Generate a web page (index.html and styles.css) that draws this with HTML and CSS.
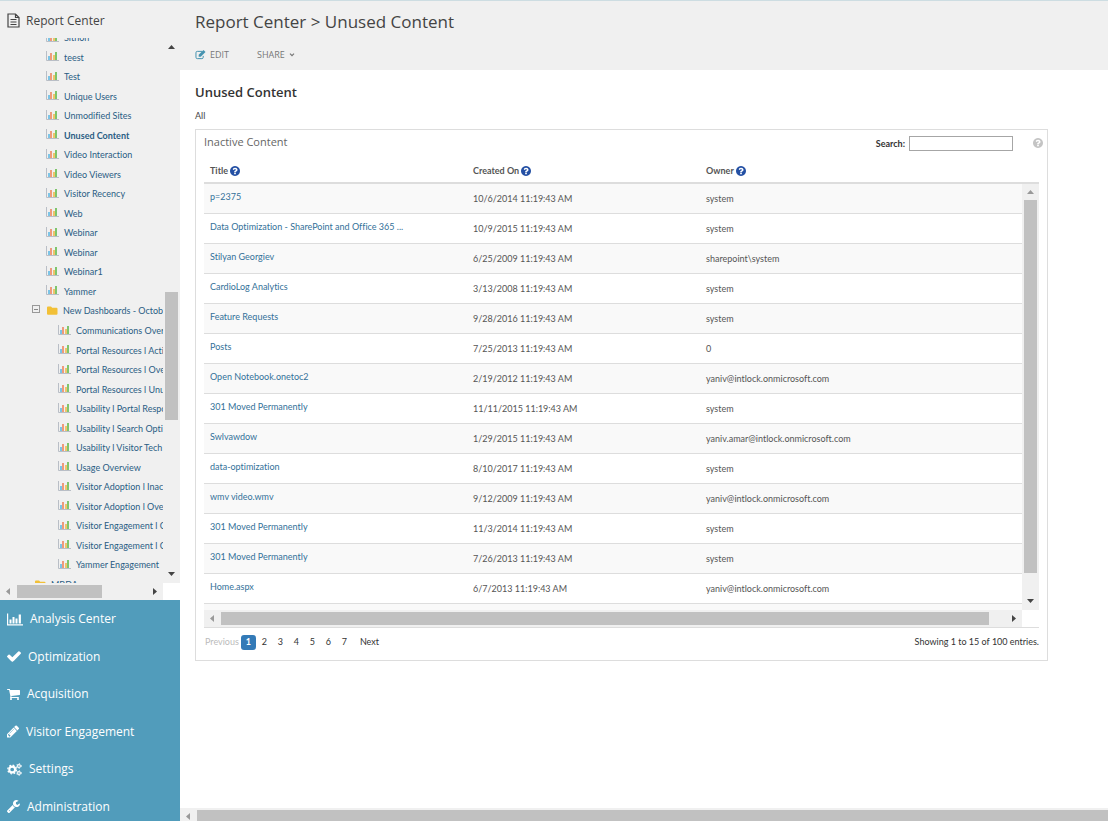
FILE: index.html
```html
<!DOCTYPE html>
<html lang="en">
<head>
<meta charset="utf-8">
<title>Report Center - Unused Content</title>
<link rel="stylesheet" href="styles.css">
</head>
<body>
<svg class="sprite" aria-hidden="true">
  <symbol id="chart" viewBox="0 0 13 10"><path d="M.5 0v9.500H13" fill="none" stroke="#b9bec6"/><path d="M2 5h2v4H2z" fill="#7cc4e6"/><path d="M4 2h2v7H4z" fill="#ee9a7c"/><path d="M7 4h2v5H7z" fill="#efc46c"/><path d="M9 1h2v8H9z" fill="#7fc56c"/></symbol>
  <symbol id="folder" viewBox="0 0 11 9"><path d="M0 1.500Q0 .5 1 .5h3l1.200 1.200H9.500q1 0 1 1v5q0 1-1 1H1q-1 0-1-1z" fill="#f2c037"/></symbol>
  <symbol id="file" viewBox="0 0 13 15"><path d="M1 1h7.500L12 4.500V14H1zM8.500 1v3.500H12M3.500 6.500h6M3.500 9h6M3.500 11.500h6" fill="none" stroke="currentColor" stroke-width="1.200"/></symbol>
  <symbol id="edit" viewBox="0 0 12 11"><path d="M8 1.500H2.500Q1 1.500 1 3v5q0 1.500 1.500 1.500h5Q9 9.500 9 8V6.500" fill="none" stroke="currentColor" stroke-width="1.100"/><path d="M4 7.500V5.200L9.300 0l2.200 2.200L6.300 7.500z" fill="currentColor"/></symbol>
  <symbol id="bars" viewBox="0 0 16 12"><path d="M.6 0v11.400H16" fill="none" stroke="currentColor" stroke-width="1.200"/><path d="M2.500 6h2v4h-2zM5.500 3.500h2V10h-2zM8.500 5h2v5h-2zM11.700 1h2.200v9h-2.200z" fill="currentColor"/></symbol>
  <symbol id="check" viewBox="121 334 1550 1188"><path fill="currentColor" d="M1671 566q0 40-28 68l-724 724-136 136q-28 28-68 28t-68-28l-136-136-362-362q-28-28-28-68t28-68l136-136q28-28 68-28t68 28l294 295 656-657q28-28 68-28t68 28l136 136q28 28 28 68z"/></symbol>
  <symbol id="cart" viewBox="64 256 1664 1408"><path fill="currentColor" d="M704 1536q0 52-38 90t-90 38-90-38-38-90 38-90 90-38 90 38 38 90zm896 0q0 52-38 90t-90 38-90-38-38-90 38-90 90-38 90 38 38 90zm128-1088v512q0 24-16.500 42.500t-40.500 21.500l-1044 122q13 60 13 70 0 16-24 64h920q26 0 45 19t19 45-19 45-45 19h-1024q-26 0-45-19t-19-45q0-11 8-31.500t16-36 21.500-40 15.500-29.500l-177-823h-204q-26 0-45-19t-19-45 19-45 45-19h256q16 0 28.500 6.500t19.500 15.500 13 24.500 8 26 5.500 29.500 4.500 26h1201q26 0 45 19t19 45z"/></symbol>
  <symbol id="pencil" viewBox="128 149 1515 1515"><path fill="currentColor" d="M491 1536l91-91-235-235-91 91v107h128v128h107zm523-928q0-22-22-22-10 0-17 7l-542 542q-7 7-7 17 0 22 22 22 10 0 17-7l542-542q7-7 7-17zm-54-192l416 416-832 832h-416v-416zm683 96q0 53-37 90l-166 166-416-416 166-165q36-38 90-38 53 0 91 38l235 234q37 39 37 91z"/></symbol>
  <symbol id="cogs" viewBox="0 0 16 14"><g fill="none" stroke="currentColor"><circle cx="5.500" cy="7" r="3.100" stroke-width="2.200"/><circle cx="5.500" cy="7" r="4.700" stroke-width="1.400" stroke-dasharray="1.850 1.841"/><circle cx="12.800" cy="3.200" r="1.500" stroke-width="1.200"/><circle cx="12.800" cy="3.200" r="2.500" stroke-width="1" stroke-dasharray="1.300 1.318"/><circle cx="12.800" cy="10.800" r="1.500" stroke-width="1.200"/><circle cx="12.800" cy="10.800" r="2.500" stroke-width="1" stroke-dasharray="1.300 1.318"/></g></symbol>
  <symbol id="wrench" viewBox="85 128 1641 1643"><path fill="currentColor" d="M448 1472q0-26-19-45t-45-19-45 19-19 45 19 45 45 19 45-19 19-45zm644-420l-682 682q-37 37-90 37-52 0-91-37l-106-108q-38-36-38-90 0-53 38-91l681-681q39 98 114.500 173.500t173.500 114.500zm634-435q0 39-23 106-47 134-164.500 217.500t-258.500 83.500q-185 0-316.500-131.500t-131.500-316.500 131.500-316.500 316.500-131.500q58 0 121.500 16.500t107.500 46.500q16 11 16 28t-16 28l-293 169v224l193 107q5-3 79-48.500t135.500-81 70.500-35.500q15 0 23.500 10t8.500 25z"/></symbol>
  <symbol id="help" viewBox="128 128 1536 1536"><path fill="currentColor" d="M1024 1376v-192q0-14-9-23t-23-9h-192q-14 0-23 9t-9 23v192q0 14 9 23t23 9h192q14 0 23-9t9-23zm256-672q0-88-55.500-163t-138.500-116-170-41q-243 0-371 213-15 24 8 42l132 100q7 6 19 6 16 0 25-12 53-68 86-92 34-24 86-24 48 0 85.500 26t37.500 59q0 38-20 61t-68 45q-63 28-115.500 86.500t-52.500 125.500v36q0 14 9 23t23 9h192q14 0 23-9t9-23q0-19 21.500-49.500t54.500-49.500q32-18 49-28.500t46-35 44.500-48 28-60.500 12.500-81zm384 192q0 209-103 385.500t-279.500 279.500-385.500 103-385.500-103-279.500-279.500-103-385.500 103-385.500 279.500-279.500 385.500-103 385.500 103 279.500 279.500 103 385.500z"/></symbol>
  <symbol id="chevron" viewBox="0 0 6 4"><path d="M1 .7l2 2 2-2" fill="none" stroke="currentColor" stroke-width="1.200"/></symbol>
  <symbol id="up" viewBox="0 0 7 4"><path d="M0 4L3.500 0 7 4z" fill="currentColor"/></symbol>
  <symbol id="down" viewBox="0 0 7 4"><path d="M0 0l3.500 4L7 0z" fill="currentColor"/></symbol>
  <symbol id="left" viewBox="0 0 4 7"><path d="M4 0L0 3.500 4 7z" fill="currentColor"/></symbol>
  <symbol id="right" viewBox="0 0 4 7"><path d="M0 0l4 3.500L0 7z" fill="currentColor"/></symbol>
</svg>

<aside class="sidebar">
  <h2 class="sidebar-title"><svg class="file-icon"><use href="#file"/></svg>Report Center</h2>
  <div class="tree-area">
    <div class="tree-view">
      <ul class="tree">
        <li><svg class="chart"><use href="#chart"/></svg><a href="#">Sithon</a></li>
        <li><svg class="chart"><use href="#chart"/></svg><a href="#">teest</a></li>
        <li><svg class="chart"><use href="#chart"/></svg><a href="#">Test</a></li>
        <li><svg class="chart"><use href="#chart"/></svg><a href="#">Unique Users</a></li>
        <li><svg class="chart"><use href="#chart"/></svg><a href="#">Unmodified Sites</a></li>
        <li class="current"><svg class="chart"><use href="#chart"/></svg><a href="#">Unused Content</a></li>
        <li><svg class="chart"><use href="#chart"/></svg><a href="#">Video Interaction</a></li>
        <li><svg class="chart"><use href="#chart"/></svg><a href="#">Video Viewers</a></li>
        <li><svg class="chart"><use href="#chart"/></svg><a href="#">Visitor Recency</a></li>
        <li><svg class="chart"><use href="#chart"/></svg><a href="#">Web</a></li>
        <li><svg class="chart"><use href="#chart"/></svg><a href="#">Webinar</a></li>
        <li><svg class="chart"><use href="#chart"/></svg><a href="#">Webinar</a></li>
        <li><svg class="chart"><use href="#chart"/></svg><a href="#">Webinar1</a></li>
        <li><svg class="chart"><use href="#chart"/></svg><a href="#">Yammer</a></li>
        <li class="group"><button class="toggle" aria-label="Collapse"></button><svg class="folder"><use href="#folder"/></svg><a href="#">New Dashboards - Octob</a></li>
        <li class="child"><svg class="chart"><use href="#chart"/></svg><a href="#">Communications Over</a></li>
        <li class="child"><svg class="chart"><use href="#chart"/></svg><a href="#">Portal Resources l Acti</a></li>
        <li class="child"><svg class="chart"><use href="#chart"/></svg><a href="#">Portal Resources l Ove</a></li>
        <li class="child"><svg class="chart"><use href="#chart"/></svg><a href="#">Portal Resources l Unu</a></li>
        <li class="child"><svg class="chart"><use href="#chart"/></svg><a href="#">Usability l Portal Respo</a></li>
        <li class="child"><svg class="chart"><use href="#chart"/></svg><a href="#">Usability l Search Opti</a></li>
        <li class="child"><svg class="chart"><use href="#chart"/></svg><a href="#">Usability l Visitor Tech</a></li>
        <li class="child"><svg class="chart"><use href="#chart"/></svg><a href="#">Usage Overview</a></li>
        <li class="child"><svg class="chart"><use href="#chart"/></svg><a href="#">Visitor Adoption l Inac</a></li>
        <li class="child"><svg class="chart"><use href="#chart"/></svg><a href="#">Visitor Adoption l Ove</a></li>
        <li class="child"><svg class="chart"><use href="#chart"/></svg><a href="#">Visitor Engagement l C</a></li>
        <li class="child"><svg class="chart"><use href="#chart"/></svg><a href="#">Visitor Engagement l C</a></li>
        <li class="child"><svg class="chart"><use href="#chart"/></svg><a href="#">Yammer Engagement</a></li>
        <li class="closed"><svg class="folder"><use href="#folder"/></svg><a href="#">MBDA</a></li>
      </ul>
    </div>
    <div class="vbar tree-vbar"><svg class="arrow-v"><use href="#up"/></svg><div class="vtrack"><i class="vthumb"></i></div><svg class="arrow-v"><use href="#down"/></svg></div>
    <div class="hbar tree-hbar"><svg class="arrow-h off"><use href="#left"/></svg><div class="htrack"><i class="hthumb"></i></div><svg class="arrow-h"><use href="#right"/></svg></div>
    <div class="corner"></div>
  </div>
  <nav class="nav">
    <a href="#"><svg class="w16"><use href="#bars"/></svg>Analysis Center</a>
    <a href="#"><svg class="w14"><use href="#check"/></svg>Optimization</a>
    <a href="#"><svg class="w13"><use href="#cart"/></svg>Acquisition</a>
    <a href="#"><svg class="w12"><use href="#pencil"/></svg>Visitor Engagement</a>
    <a href="#"><svg class="w15"><use href="#cogs"/></svg>Settings</a>
    <a href="#"><svg class="w13"><use href="#wrench"/></svg>Administration</a>
  </nav>
</aside>

<main class="main">
  <header class="header">
    <h1>Report Center &gt; Unused Content</h1>
    <div class="actions">
      <button><svg class="edit-icon"><use href="#edit"/></svg>EDIT</button>
      <button>SHARE<svg class="chevron"><use href="#chevron"/></svg></button>
    </div>
  </header>
  <div class="content">
    <h2>Unused Content</h2>
    <p class="scope">All</p>
    <section class="widget">
      <div class="widget-head">
        <h3>Inactive Content</h3>
        <label for="search">Search:</label><input id="search" type="text">
        <button class="widget-help" aria-label="Help"><svg><use href="#help"/></svg></button>
      </div>
      <div class="grid">
        <div class="grid-view">
          <table>
            <thead><tr><th class="c-title">Title <svg><use href="#help"/></svg></th><th class="c-date">Created On <svg><use href="#help"/></svg></th><th>Owner <svg><use href="#help"/></svg></th></tr></thead>
            <tbody>
              <tr><td><a href="#">p=2375</a></td><td>10/6/2014 11:19:43 AM</td><td>system</td></tr>
              <tr><td><a href="#">Data Optimization - SharePoint and Office 365 ...</a></td><td>10/9/2015 11:19:43 AM</td><td>system</td></tr>
              <tr><td><a href="#">Stilyan Georgiev</a></td><td>6/25/2009 11:19:43 AM</td><td>sharepoint\system</td></tr>
              <tr><td><a href="#">CardioLog Analytics</a></td><td>3/13/2008 11:19:43 AM</td><td>system</td></tr>
              <tr><td><a href="#">Feature Requests</a></td><td>9/28/2016 11:19:43 AM</td><td>system</td></tr>
              <tr><td><a href="#">Posts</a></td><td>7/25/2013 11:19:43 AM</td><td>0</td></tr>
              <tr><td><a href="#">Open Notebook.onetoc2</a></td><td>2/19/2012 11:19:43 AM</td><td>yaniv@intlock.onmicrosoft.com</td></tr>
              <tr><td><a href="#">301 Moved Permanently</a></td><td>11/11/2015 11:19:43 AM</td><td>system</td></tr>
              <tr><td><a href="#">Swlvawdow</a></td><td>1/29/2015 11:19:43 AM</td><td>yaniv.amar@intlock.onmicrosoft.com</td></tr>
              <tr><td><a href="#">data-optimization</a></td><td>8/10/2017 11:19:43 AM</td><td>system</td></tr>
              <tr><td><a href="#">wmv video.wmv</a></td><td>9/12/2009 11:19:43 AM</td><td>yaniv@intlock.onmicrosoft.com</td></tr>
              <tr><td><a href="#">301 Moved Permanently</a></td><td>11/3/2014 11:19:43 AM</td><td>system</td></tr>
              <tr><td><a href="#">301 Moved Permanently</a></td><td>7/26/2013 11:19:43 AM</td><td>system</td></tr>
              <tr><td><a href="#">Home.aspx</a></td><td>6/7/2013 11:19:43 AM</td><td>yaniv@intlock.onmicrosoft.com</td></tr>
              <tr><td></td><td></td><td></td></tr>
            </tbody>
          </table>
        </div>
        <div class="vbar grid-vbar"><svg class="arrow-v off"><use href="#up"/></svg><div class="vtrack"><i class="vthumb"></i></div><svg class="arrow-v"><use href="#down"/></svg></div>
        <div class="hbar grid-hbar"><svg class="arrow-h off"><use href="#left"/></svg><div class="htrack"><i class="hthumb"></i></div><svg class="arrow-h"><use href="#right"/></svg></div>
      </div>
      <footer class="pager">
        <button disabled class="prev">Previous</button>
        <button class="page active">1</button><button class="page">2</button><button class="page">3</button><button class="page">4</button><button class="page">5</button><button class="page">6</button><button class="page">7</button>
        <button class="next">Next</button>
        <span class="summary">Showing 1 to 15 of 100 entries.</span>
      </footer>
    </section>
  </div>
  <div class="hbar page-hbar"><svg class="arrow-h off"><use href="#left"/></svg><div class="htrack"><i class="hthumb"></i></div></div>
</main>
</body>
</html>
```
FILE: styles.css
```css
* { box-sizing: border-box; }

body {
  margin: 0;
  height: 100vh;
  display: flex;
  overflow: hidden;
  border-top: 1px solid #cddde2;
  background: #fff;
  color: #555;
  font: 9px/12px Lato, "Segoe UI", sans-serif;
  font-variant-ligatures: none;
}

h1, h2, h3, p, ul { margin: 0; padding: 0; font-weight: 400; }
h1, h2, h3, .nav { font-family: "Open Sans", "Segoe UI", sans-serif; }
ul { list-style: none; }
a { text-decoration: none; color: inherit; }
button { border: 0; padding: 0; background: none; font: inherit; font-variant-ligatures: none; color: inherit; cursor: pointer; }
svg { display: block; flex: none; }
.sprite { position: absolute; width: 0; height: 0; }

/* Sidebar */
.sidebar {
  flex: 0 0 180px;
  display: flex;
  flex-direction: column;
  overflow: hidden;
  background: #f0f0f0;
}
.sidebar-title {
  flex: 0 0 37px;
  display: flex;
  align-items: center;
  gap: 6px;
  padding: 2px 7px 0;
  font-size: 12px;
  color: #444;
}
.file-icon { width: 13px; height: 15px; }

.tree-area {
  flex: 1;
  min-height: 0;
  display: grid;
  grid-template-columns: minmax(0, 1fr) 17px;
  grid-template-rows: minmax(0, 1fr) 17px;
}
.tree-view { overflow: hidden; }
.tree {
  display: grid;
  grid-auto-rows: 1fr;
  height: 566px;
  margin-top: -10px;
  color: #2a5d84;
  white-space: nowrap;
}
.tree li { display: flex; align-items: center; gap: 5px; padding-left: 46px; }
.tree .child { padding-left: 58px; }
.tree .group { padding-left: 32px; }
.tree .closed { padding-left: 35px; }
.tree .current { font-weight: 700; }
.tree a { padding-top: 1px; }
.chart { width: 13px; height: 10px; margin-bottom: 2px; }
.folder { width: 11px; height: 9px; }
.toggle {
  width: 8px;
  height: 8px;
  margin: 0 2px 3px 0;
  border: 1px solid #999;
  background: linear-gradient(#888, #888) center / 4px 1px no-repeat;
}
.corner { background: #fff; }

/* Scroll bars */
.vbar, .hbar { display: flex; align-items: center; background: #f0f0f0; color: #444; }
.vbar { flex-direction: column; padding: 7px 0; }
.vtrack, .htrack { flex: 1; display: flex; }
.vtrack { flex-direction: column; margin: 6px 0; }
.htrack { margin: 0 7px; }
.vthumb, .hthumb { background: #c1c1c1; }
.vthumb { width: 13px; }
.hthumb { height: 13px; }
.arrow-v { width: 7px; height: 4px; }
.arrow-h { width: 4px; height: 7px; }
.off { color: #999; }
.hbar { padding: 0 6px; }
.tree-vbar .vthumb { height: 128px; margin-top: 237px; }
.tree-hbar .hthumb { width: 85px; }

/* Section navigation */
.nav {
  display: grid;
  grid-auto-rows: 1fr;
  flex: 0 0 225px;
  margin-bottom: -4px;
  background: #519cbb;
  color: #fff;
  font-size: 12px;
}
.nav a { display: flex; align-items: center; gap: 7px; padding: 1px 0 0 7px; }
.nav svg { height: 13px; }
.w12 { width: 12px; }
.w13 { width: 13px; }
.w14 { width: 14px; }
.w15 { width: 15px; }
.w16 { width: 16px; }

/* Page */
.main { flex: 1; min-width: 0; display: flex; flex-direction: column; overflow: hidden; }
.header { flex: 0 0 69px; padding: 9px 15px 0; background: #f0f0f0; }
.header h1 { font-size: 17px; line-height: 24px; color: #444; }
.actions { display: flex; gap: 28px; margin-top: 15px; color: #777; font-family: "Open Sans", "Segoe UI", sans-serif; }
.actions button { display: flex; align-items: center; gap: 4px; }
.edit-icon { width: 11px; height: 10px; color: #4593b0; }
.chevron { width: 6px; height: 4px; }

.content { flex: 1; min-height: 0; padding: 12px 60px 0 15px; }
.content h2 { font-size: 13px; line-height: 20px; font-weight: 600; color: #333; }
.scope { margin: 8px 0 7px; color: #444; }

.widget { border: 1px solid #ddd; padding: 0 8px; }
.widget-head { display: flex; align-items: center; height: 25px; }
.widget-head h3 { margin-right: auto; padding-bottom: 2px; font-size: 11px; line-height: 16px; color: #666; }
.widget-head label { font-weight: 700; color: #333; margin: 2px 4px 0 0; }
.widget-head input { width: 104px; height: 15px; margin: 2px 20px 0 0; border: 1px solid #a6a6a6; padding: 0 4px; font: inherit; }
.widget-help { color: #c4c4c4; margin-right: -4px; }
.widget-help svg { width: 10px; height: 10px; }

.grid {
  display: grid;
  grid-template-columns: minmax(0, 1fr) 17px;
  grid-template-rows: 455px 17px;
  border-bottom: 1px solid #ddd;
}
.grid-view { overflow: hidden; }
table { width: 100%; border-collapse: separate; border-spacing: 0; table-layout: fixed; }
.c-title { width: 263px; }
.c-date { width: 233px; }
th { height: 29px; padding: 5px 6px 0; border-bottom: 2px solid #ddd; text-align: left; font-weight: 700; }
th svg { display: inline-block; width: 10px; height: 10px; color: #2450a4; vertical-align: -2px; }
td { height: 30px; padding: 0 6px; border-bottom: 1px solid #ddd; }
td:first-child { padding-bottom: 4px; color: #337199; }
tbody tr:nth-child(odd) { background: #f9f9f9; }
.grid-vbar { margin-top: 27px; border-top: 2px solid #ddd; padding-top: 6px; }
.grid-vbar .vthumb { height: 373px; }
.grid-hbar .hthumb { width: 98%; }

.pager { display: flex; align-items: center; height: 32px; padding-bottom: 4px; color: #333; }
.prev { color: #bbb; margin: 0 2px 0 1px; }
.page { width: 15px; height: 15px; margin-right: 1px; border-radius: 3px; }
.active { background: #337ab7; color: #fff; font-weight: 700; }
.next { margin-left: 7px; }
.summary { margin-left: auto; }

.page-hbar { height: 17px; margin-bottom: -4px; }
.page-hbar .hthumb { flex: 1; }
.page-hbar .htrack { margin-right: -6px; }
```
